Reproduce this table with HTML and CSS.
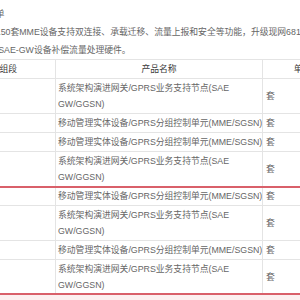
FILE: index.html
```html
<!DOCTYPE html>
<html lang="zh">
<head>
<meta charset="utf-8">
<link rel="stylesheet" href="styles.css">
</head>
<body>
<div class="page">
  <p class="intro">（一）采购清单<br>本期工程扩容150套MME设备支持双连接、承载迁移、流量上报和安全等功能，升级现网681套<br>套，并为现有 SAE-GW设备补偿流量处理硬件。</p>
  <table class="spec">
    <colgroup>
      <col class="c1"><col class="c2"><col class="c3"><col class="c4">
    </colgroup>
    <thead>
      <tr><th>采购组段</th><th>产品名称</th><th>单位</th><th>数量</th></tr>
    </thead>
    <tbody>
      <tr><td></td><td>系统架构演进网关/GPRS业务支持节点(SAE<br>GW/GGSN)</td><td>套</td><td></td></tr>
      <tr><td></td><td>移动管理实体设备/GPRS分组控制单元(MME/SGSN)</td><td>套</td><td></td></tr>
      <tr><td></td><td>移动管理实体设备/GPRS分组控制单元(MME/SGSN)</td><td>套</td><td></td></tr>
      <tr><td></td><td>系统架构演进网关/GPRS业务支持节点(SAE<br>GW/GGSN)</td><td>套</td><td></td></tr>
    </tbody>
    <tbody class="marked">
      <tr><td></td><td>移动管理实体设备/GPRS分组控制单元(MME/SGSN)</td><td>套</td><td></td></tr>
      <tr><td></td><td>系统架构演进网关/GPRS业务支持节点(SAE<br>GW/GGSN)</td><td>套</td><td></td></tr>
      <tr><td></td><td>移动管理实体设备/GPRS分组控制单元(MME/SGSN)</td><td>套</td><td></td></tr>
      <tr><td></td><td>系统架构演进网关/GPRS业务支持节点(SAE<br>GW/GGSN)</td><td>套</td><td></td></tr>
    </tbody>
  </table>
  <div class="tail"></div>
</div>
</body>
</html>
```
FILE: styles.css
```css
html, body {
  margin: 0;
  padding: 0;
  background: #ffffff;
  overflow: hidden;
}
.page {
  margin-left: -57px;
  width: 480px;
  font-family: "Liberation Sans", "Noto Sans CJK SC", sans-serif;
  font-size: 8.8px;
  color: #666;
}
.intro {
  margin: 0;
  padding-top: 5px;
  line-height: 18px;
  white-space: nowrap;
}
.spec {
  border-collapse: collapse;
  table-layout: fixed;
  width: 480px;
}
.spec .c1 { width: 112px; }
.spec .c2 { width: 207px; }
.spec .c3 { width: 80px; }
.spec .c4 { width: 81px; }
.spec th, .spec td {
  border: 1px solid #e4e4e4;
  line-height: 16px;
  padding: 1px 2px;
  vertical-align: middle;
  white-space: nowrap;
  overflow: hidden;
}
.spec th {
  font-weight: normal;
  color: #3a3a3a;
  text-align: center;
}
.spec td {
  text-align: left;
}
.spec td:nth-child(3) {
  padding-left: 3px;
}
.spec .marked tr:first-child td {
  border-top: 2px solid #d9606a;
  padding-top: 0;
}
.spec .marked tr:last-child td {
  border-bottom: 2px solid #d9606a;
  padding-bottom: 0;
}
.tail {
  height: 12px;
  background: #fcf0f0;
}
```
